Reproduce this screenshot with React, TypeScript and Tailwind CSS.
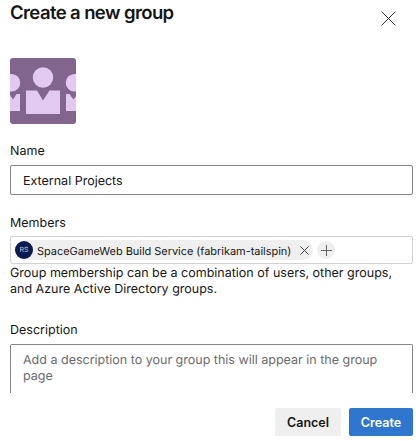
function GroupAvatar() {
  return (
    <svg className="mt-[33px] block h-[66px] w-[66px] rounded-[3px]" viewBox="0 0 66 66" aria-hidden="true">
      <rect width="66" height="66" fill="#82658e" />
      <g fill="#e2c9f1">
        <circle cx="33" cy="19.5" r="10.2" />
        <path d="M16 32.5h11l6 10 6.5-10H50V56H16z" />
        <circle cx="1.500" cy="24.7" r="8.8" />
        <path d="M-12 36H-.5L3 41.500 6.500 36H10v17h-22z" />
        <circle cx="64.500" cy="24.7" r="8.8" />
        <path d="M56 36h3.500l4 5.500 4-5.500H78v17H56z" />
      </g>
    </svg>
  );
}

function Cross({ className }: { className: string }) {
  return (
    <svg className={className} viewBox="0 0 14 14" fill="none" stroke="currentColor" aria-hidden="true">
      <path d="M.5.5l13 13M13.5.5l-13 13" vectorEffect="non-scaling-stroke" />
    </svg>
  );
}

export default function App() {
  return (
    <div className="flex h-[441px] w-[420px] flex-col overflow-hidden bg-white pr-[7px] pl-[10px] font-['Inter','Liberation_Sans',sans-serif] text-[12.5px] leading-4 text-[#161616] [text-rendering:geometricPrecision]">
      <header className="flex h-[25px] items-start justify-between">
        <h1 className="pt-px text-[18.5px] leading-6 font-semibold tracking-[-0.6px]">Create a new group</h1>
        <button className="mt-[11px] mr-[17px]" aria-label="Close">
          <Cross className="block h-[15px] w-[15px] text-[#333]" />
        </button>
      </header>

      <GroupAvatar />

      <label className="mt-[20px] block">Name</label>
      <div className="mt-[5px] flex h-[30px] shrink-0 items-center rounded-[2px] border border-[#858585] px-3 pt-[3px]">
        External Projects
      </div>

      <label className="mt-[21px] block">Members</label>
      <div className="mt-[4px] flex h-[28px] shrink-0 items-center gap-1 rounded-[2px] border border-[#d2d2d2] pl-1">
        <div className="flex h-5 w-[298px] shrink-0 items-center rounded-full bg-[#efefef]">
          <span className="flex h-[18px] w-[18px] shrink-0 items-center justify-center rounded-full bg-[#0b1b52] text-[7px] text-[#c3c8dc]">RS</span>
          <span className="ml-1 pt-px text-[11px] tracking-[-0.04px] whitespace-nowrap">SpaceGameWeb Build Service (fabrikam-tailspin)</span>
          <Cross className="mr-1 ml-auto h-[9px] w-[9px] shrink-0 text-[#444]" />
        </div>
        <button className="flex h-[18px] w-[18px] items-center justify-center rounded-full bg-[#efefef]" aria-label="Add member">
          <svg className="h-[11px] w-[11px]" viewBox="0 0 11 11" stroke="#666" aria-hidden="true">
            <path d="M5.5 0v11M0 5.5h11" />
          </svg>
        </button>
      </div>
      <p className="pt-[2px] whitespace-nowrap">
        Group membership can be a combination of users, other groups,
        <br />
        and Azure Active Directory groups.
      </p>

      <label className="mt-[25px] block">Description</label>
      <div className="mt-[5px] h-[49px] shrink-0 rounded-t-[2px] border border-b-0 border-[#858585] px-3 pt-[8px] whitespace-nowrap text-[#6b6b6b]">
        Add a description to your group this will appear in the group
        <br />
        page
      </div>

      <footer className="mt-[15px] flex justify-end gap-2 font-semibold">
        <button className="h-[28px] w-[66px] rounded-[2px] bg-[#efefef] pt-[2px]">Cancel</button>
        <button className="h-[28px] w-[64px] rounded-[2px] bg-[#2f76cf] pt-[2px] text-white">Create</button>
      </footer>
    </div>
  );
}
